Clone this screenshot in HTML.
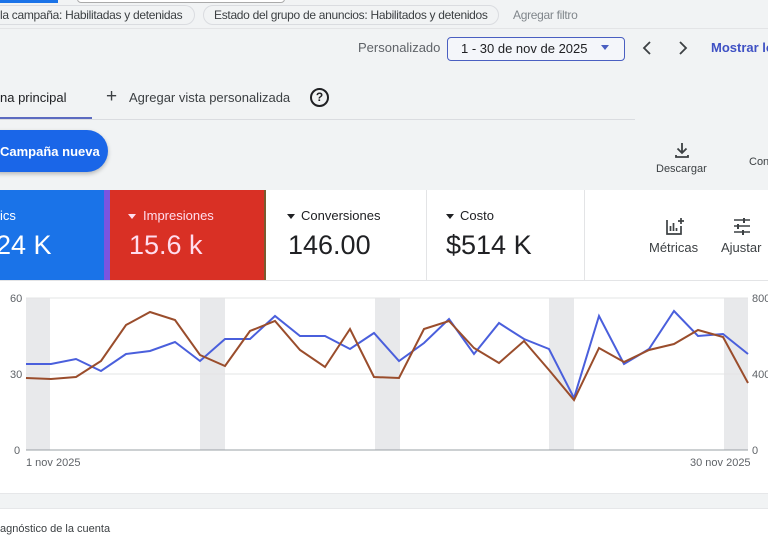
<!DOCTYPE html>
<html><head><meta charset="utf-8"><style>
*{margin:0;padding:0;box-sizing:border-box}
body{width:768px;height:538px;overflow:hidden;background:#f1f3f4;font-family:"Liberation Sans",sans-serif;position:relative;color:#3c4043}
.a{position:absolute;white-space:nowrap}
.chip{position:absolute;top:5px;height:20px;border:1px solid #dadce0;border-radius:10px;font-size:12px;letter-spacing:-0.3px;line-height:18px;color:#3c4043;padding:0 10px}
</style></head><body>
<div class="a" style="left:0;top:0;width:58px;height:3px;background:#1a73e8"></div>
<div class="a" style="left:77px;top:-6px;width:208px;height:9px;border:1px solid #aaa;border-radius:4px;background:#fff"></div>
<div class="chip" style="left:-9px;border-left:none;padding-left:9px;padding-right:12px">la campaña: Habilitadas y detenidas</div>
<div class="chip" style="left:203px">Estado del grupo de anuncios: Habilitados y detenidos</div>
<div class="a" style="left:513px;top:8px;font-size:12px;letter-spacing:-0.3px;color:#80868b">Agregar filtro</div>
<div class="a" style="left:0;top:28px;width:768px;height:1px;background:#e3e4e6"></div>

<div class="a" style="left:358px;top:40px;font-size:13px;color:#5f6368">Personalizado</div>
<div class="a" style="left:447px;top:37px;width:178px;height:24px;border:1.5px solid #4a5fc1;border-radius:4px;background:#f4f6fa"></div>
<div class="a" style="left:461px;top:41px;font-size:13px;color:#202124">1 - 30 de nov de 2025</div>
<div class="a" style="left:601px;top:45px;width:0;height:0;border-left:4px solid transparent;border-right:4px solid transparent;border-top:5px solid #4a5fc1"></div>
<svg class="a" style="left:638px;top:39px" width="54" height="18"><path d="M12 3l-6 6 6 6M42 3l6 6-6 6" fill="none" stroke="#3c4043" stroke-width="1.8"/></svg>
<div class="a" style="left:711px;top:40px;font-size:13px;color:#3f51c4;font-weight:bold">Mostrar lo</div>

<div class="a" style="left:0;top:90px;font-size:13px;color:#202124">na principal</div>
<div class="a" style="left:0;top:117px;width:92px;height:3px;background:#5c6bc0"></div>
<div class="a" style="left:0;top:119px;width:635px;height:1px;background:#dadce0"></div>
<div class="a" style="left:106px;top:86px;font-size:19px;color:#3c4043">+</div>
<div class="a" style="left:129px;top:90px;font-size:13px;color:#3c4043">Agregar vista personalizada</div>
<div class="a" style="left:310px;top:88px;width:19px;height:19px;border:2px solid #202124;border-radius:50%;font-size:12px;font-weight:bold;text-align:center;line-height:15px;color:#202124">?</div>

<div class="a" style="left:-20px;top:130px;width:128px;height:42px;background:#1a66e8;border-radius:21px;box-shadow:0 2px 4px rgba(0,0,0,.25)"></div>
<div class="a" style="left:0;top:144px;font-size:13px;color:#fff;font-weight:bold">Campaña nueva</div>

<svg class="a" style="left:673px;top:141px" width="18" height="18"><path d="M9 2v10M4.5 7.5L9 12l4.5-4.5M3 14v2h12v-2" fill="none" stroke="#3c4043" stroke-width="1.8"/></svg>
<div class="a" style="left:656px;top:163px;font-size:11px;color:#3c4043">Descargar</div>
<div class="a" style="left:749px;top:156px;font-size:11px;color:#3c4043">Con</div>

<div class="a" style="left:0;top:190px;width:768px;height:303px;background:#fff"></div>
<div class="a" style="left:0;top:190px;width:104px;height:90px;background:#1a73e8"></div>
<div class="a" style="left:104px;top:190px;width:6px;height:90px;background:#7b55e0"></div>
<div class="a" style="left:110px;top:190px;width:156px;height:90px;background:#d93025;border-right:2px solid #7a5a2e"></div>
<div class="a" style="left:0;top:208px;font-size:13px;color:#fff">ics</div>
<div class="a" style="left:-4px;top:230px;font-size:27px;color:#fff">24 K</div>
<div class="a" style="left:128px;top:214px;width:0;height:0;border-left:4px solid transparent;border-right:4px solid transparent;border-top:5px solid #fde"></div>
<div class="a" style="left:143px;top:208px;font-size:13px;color:#fde">Impresiones</div>
<div class="a" style="left:129px;top:230px;font-size:27px;color:#fde">15.6 k</div>
<div class="a" style="left:426px;top:190px;width:1px;height:90px;background:#e3e4e6"></div>
<div class="a" style="left:584px;top:190px;width:1px;height:90px;background:#e3e4e6"></div>
<div class="a" style="left:287px;top:214px;width:0;height:0;border-left:4px solid transparent;border-right:4px solid transparent;border-top:5px solid #202124"></div>
<div class="a" style="left:301px;top:208px;font-size:13px;color:#202124">Conversiones</div>
<div class="a" style="left:288px;top:230px;font-size:27px;color:#202124">146.00</div>
<div class="a" style="left:446px;top:214px;width:0;height:0;border-left:4px solid transparent;border-right:4px solid transparent;border-top:5px solid #202124"></div>
<div class="a" style="left:460px;top:208px;font-size:13px;color:#202124">Costo</div>
<div class="a" style="left:446px;top:230px;font-size:27px;color:#202124">$514 K</div>
<svg class="a" style="left:665px;top:216px" width="20" height="20"><path d="M2 4v14h14V10M5.5 15V10M8.5 15V7M11.5 15v-3M13 5h6M16 2v6" fill="none" stroke="#3c4043" stroke-width="1.7"/></svg>
<div class="a" style="left:649px;top:240px;font-size:13px;color:#3c4043">Métricas</div>
<svg class="a" style="left:733px;top:217px" width="18" height="18"><path d="M1 3h16M1 9h16M1 15h16" stroke="#3c4043" stroke-width="1.6"/><path d="M11 1v5M5 7v5M10 13v5" stroke="#3c4043" stroke-width="2"/></svg>
<div class="a" style="left:721px;top:240px;font-size:13px;color:#3c4043">Ajustar</div>
<div class="a" style="left:0;top:280px;width:768px;height:1px;background:#e3e4e6"></div>

<svg class="a" style="left:0;top:290px" width="768" height="180" font-family="Liberation Sans" font-size="11" fill="#5f6368">
<g transform="translate(0,-290)">
<rect x="26" y="298" width="24" height="152" fill="#e8e9eb"/>
<rect x="200" y="298" width="25" height="152" fill="#e8e9eb"/>
<rect x="375" y="298" width="25" height="152" fill="#e8e9eb"/>
<rect x="549" y="298" width="25" height="152" fill="#e8e9eb"/>
<rect x="724" y="298" width="24" height="152" fill="#e8e9eb"/>
<line x1="26" y1="298" x2="748" y2="298" stroke="#e3e4e6"/>
<line x1="26" y1="374" x2="748" y2="374" stroke="#e3e4e6"/>
<line x1="26" y1="450" x2="748" y2="450" stroke="#9aa0a6"/>
<text x="10" y="302">60</text><text x="10" y="378">30</text><text x="14" y="454">0</text>
<text x="752" y="302">800</text><text x="752" y="378">400</text><text x="752" y="454">0</text>
<text x="26" y="466">1 nov 2025</text><text x="690" y="466">30 nov 2025</text>
<polyline fill="none" stroke="#4a5fdc" stroke-width="2" points="26,364 51,364 76,359 101,371 126,354 150,351 175,342 200,361 225,339 250,339 275,316 300,336 325,336 350,349 374,333 399,361 424,343 449,319 474,354 499,323 524,339 549,349 574,398 599,316 624,364 649,349 674,311 698,336 723,334 748,354"/>
<polyline fill="none" stroke="#9a4d2c" stroke-width="2" points="26,378 51,379 76,377 101,361 126,325 150,312 175,320 200,355 225,366 250,331 275,321 300,350 325,367 350,329 374,377 399,378 424,329 449,321 474,348 499,363 524,341 549,370 574,400 599,348 624,362 649,350 674,344 698,330 723,337 748,383"/>
</g></svg>

<div class="a" style="left:0;top:493px;width:768px;height:16px;background:#f1f3f4;border-top:1px solid #e6e7e9;border-bottom:1px solid #e6e7e9"></div>
<div class="a" style="left:0;top:509px;width:768px;height:29px;background:#fff"></div>
<div class="a" style="left:0;top:523px;font-size:11px;color:#3c4043">agnóstico de la cuenta</div>
</body></html>
